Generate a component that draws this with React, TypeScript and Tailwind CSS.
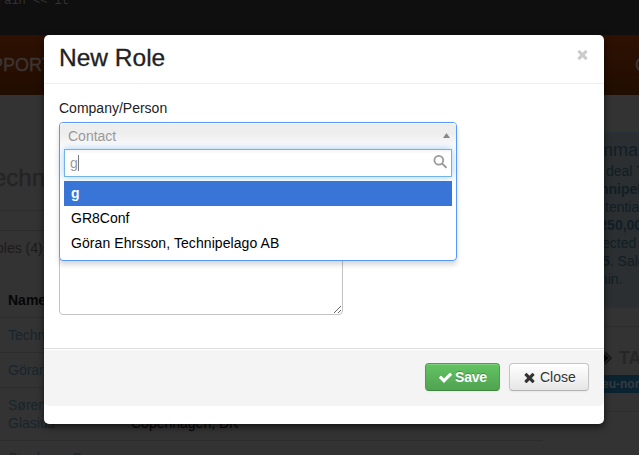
import React from 'react';

const TIMES =
  'M1490 1322q0 40-28 68l-136 136q-28 28-68 28t-68-28l-294-294-294 294q-28 28-68 28t-68-28l-136-136q-28-28-28-68t28-68l294-294-294-294q-28-28-28-68t28-68l136-136q28-28 68-28t68 28l294 294 294-294q28-28 68-28t68 28l136 136q28 28 28 68t-28 68l-294 294 294 294q28 28 28 68z';
const CHECK =
  'M1671 566q0 40-28 68l-724 724-136 136q-28 28-68 28t-68-28l-136-136-362-362q-28-28-28-68t28-68l136-136q28-28 68-28t68 28l294 295 656-657q28-28 68-28t68 28l136 136q28 28 28 68z';

function Glyph({ d, className }: { d: string; className: string }) {
  return (
    <svg viewBox="0 0 1792 1792" className={className} fill="currentColor">
      <path d={d} />
    </svg>
  );
}

function Row({ name, place, className }: { name: React.ReactNode; place?: string; className: string }) {
  return (
    <div className={`flex border-t border-[#2c2c2c] pl-2 pt-2 leading-[18px] ${className}`}>
      <div className="w-[123px] text-[#17252d]">{name}</div>
      <div className="pt-[18px] text-[#060606]">{place}</div>
    </div>
  );
}

function Page() {
  return (
    <div className="flex h-[455px] flex-col overflow-hidden bg-[#333333] text-[14px]">
      <div className="flex h-[35px] shrink-0 flex-col bg-[#0f0f0f]">
        <pre className="-mt-[7px] ml-[-3px] font-['Liberation_Mono'] text-[12px] leading-[17px] text-[#333333]">rain &lt;&lt; it</pre>
      </div>
      <div className="flex h-[60px] shrink-0 items-center justify-between bg-linear-to-b from-[#2e1103] to-[#210d01] text-[18px] text-[#3b3532]">
        <span className="-ml-[9px] [-webkit-text-stroke:0.4px_#3b3532]">PPORT</span>
        <span className="-mr-[9px] [-webkit-text-stroke:0.4px_#3b3532]">C</span>
      </div>
      <div className="flex flex-1">
        <div className="w-[543px]">
          <div className="h-[115px] overflow-hidden pt-[69px]">
            <h1 className="-ml-[7px] text-[24px] leading-7 text-[#242424] [-webkit-text-stroke:0.4px_#242424]">echnipelago</h1>
          </div>
          <div className="h-[20px] border-t border-[#2d2d2d]" />
          <div className="h-[56px] border-t border-[#2b2b2b] pt-[8px] leading-[18px] text-[#1b1b1b]">
            <span className="-ml-[4px]">oles (4)</span>
          </div>
          <div className="h-[31px] pl-2 pt-[5px] font-bold leading-[18px] text-[#060606]">Name</div>
          <Row name="Technipelago" className="h-[35px]" />
          <Row name="Göran" className="h-[35px]" />
          <Row name={<>Søren<br />Glasius</>} place="Copenhagen, DK" className="h-[53px]" />
          <Row name="Stephane G" className="h-[35px]" />
        </div>
        <div className="ml-[41px] w-[55px] overflow-hidden whitespace-nowrap pt-[37px]">
          <div className="h-[176px] border-y border-[#253238] bg-[#2b2f31] pt-[7px] leading-[18px] text-[#111e25]">
            <h2 className="ml-[14px] h-[22px] text-[18px] leading-5">mmary</h2>
            <p className="ml-[22px]">deal T</p>
            <p className="ml-[16px] font-bold">hnipelago</p>
            <p className="ml-[21px]">tential</p>
            <p className="ml-[13px] font-bold">R50,000</p>
            <p className="ml-[18px]">ected</p>
            <p className="ml-[18px]"><b>5</b>. Sales</p>
            <p className="ml-[12px]">min.</p>
          </div>
          <div className="mt-[18px] h-[86px] border-y border-[#2d2d2d] pt-[22px]">
            <div className="flex h-[18px] items-center text-[17.5px] font-bold text-[#262626]">
              <svg viewBox="0 0 24 14" className="ml-[4px] h-[14px] w-[24px] shrink-0" fill="none" stroke="#161616">
                <path d="M2 1H14L21 7L14 13H2Z" fill="#080808" stroke="none" />
                <path d="M17 1L23 7L17 13" strokeWidth="1.5" />
              </svg>
              <span className="ml-[7px]">TAGS</span>
            </div>
            <div className="mt-[8px] h-[18px] bg-[#0b2230] pl-[18px] text-[12px] font-bold leading-[18px] text-[#333b40]">eu-nord</div>
          </div>
        </div>
      </div>
    </div>
  );
}

function RoleSelect() {
  return (
    <div className="absolute left-0 top-0 h-[139px] w-[398px] rounded-[4px] border border-[#5897fb] bg-white shadow-[0_4px_5px_rgba(0,0,0,0.15)]">
      <div className="flex h-[26px] items-center justify-between rounded-t-[3px] border-t border-white bg-linear-to-b from-[#eeeeee] from-40% to-white pl-2 pr-[6px] text-[#999999]">
        <span className="mb-[2px]">Contact</span>
        <svg viewBox="0 0 7 5" className="-mt-[2px] h-[5px] w-[7px]" fill="#888888">
          <path d="M3.5 0L7 5H0Z" />
        </svg>
      </div>
      <div className="mx-1 flex h-[28px] items-center border border-[#73b3e8] bg-linear-to-b from-[#f4f4f4] to-white to-15% pl-[5px] pr-[4px] text-[#999999] shadow-[0_0_7px_rgba(82,168,236,0.6)]">
        <span>g</span>
        <span className="h-[16px] w-px bg-[#777777]" />
        <svg viewBox="0 0 14 14" className="ml-auto h-[14px] w-[14px] -translate-y-px" fill="none" stroke="#999999">
          <circle cx="5.8" cy="5.3" r="4.4" strokeWidth="1.8" />
          <path d="M8.9 8.4L13.5 12.9" strokeWidth="2" />
        </svg>
      </div>
      <ul className="mx-1 mt-1 text-black">
        <li className="h-[25px] bg-[#3875d7] pl-[7px] font-bold leading-[25px] text-white">g</li>
        <li className="h-[25px] pl-[7px] leading-[25px]">GR8Conf</li>
        <li className="h-[25px] pl-[7px] leading-[25px] tracking-[0.08px]">Göran Ehrsson, Technipelago AB</li>
      </ul>
    </div>
  );
}

export default function App() {
  return (
    <div className="relative h-[455px] w-[639px] overflow-hidden font-['Liberation_Sans',Arial,sans-serif] text-[14px] leading-[18px]">
      <Page />
      <div className="absolute left-[44px] top-[35px] flex h-[389px] w-[560px] flex-col rounded-[5px] bg-white shadow-[0_3px_7px_rgba(0,0,0,0.6)]">
        <header className="flex h-[49px] justify-between border-b border-[#eeeeee] pl-[15px] pr-[14px] text-[#222222]">
          <h3 className="mt-[8px] text-[24.5px] leading-[30px] [-webkit-text-stroke:0.3px_#222222]">New Role</h3>
          <Glyph d={TIMES} className="mt-[12px] h-[15px] w-[15px] text-[#cccccc]" />
        </header>
        <div className="h-[264px] px-[15px] pt-[15px] text-[#222222]">
          <label className="block h-[23px] leading-[18px]">Company/Person</label>
          <div className="relative h-[193px]">
            <div className="flex h-[193px] w-[284px] items-end justify-end rounded-[4px] border border-[#c4c4c4]">
              <svg viewBox="0 0 9 9" className="h-[9px] w-[9px]" stroke="#555555" strokeWidth="0.9">
                <path d="M1 8L8 1M5 8L8 5" />
              </svg>
            </div>
            <RoleSelect />
          </div>
        </div>
        <footer className="flex h-[58px] justify-end gap-[9px] rounded-b-[5px] border-t border-[#dddddd] bg-[#f4f4f4] pr-[15px] pt-[14px] shadow-[inset_0_1px_0_#fff]">
          <button className="flex h-[28px] w-[75px] items-center rounded-[4px] border border-[#4a9f4a] border-b-[#3f863f] bg-linear-to-b from-[#62c462] to-[#51a351] pl-[12px] font-bold text-white shadow-[inset_0_1px_0_rgba(255,255,255,0.2),0_1px_2px_rgba(0,0,0,0.05)] [text-shadow:0_-1px_0_rgba(0,0,0,0.25)]">
            <Glyph d={CHECK} className="h-[15px] w-[15px]" />
            <span className="ml-[2px] tracking-[-0.2px]">Save</span>
          </button>
          <button className="flex h-[28px] w-[80px] items-center rounded-[4px] border border-[#c5c5c5] border-b-[#b3b3b3] bg-linear-to-b from-white to-[#e6e6e6] pl-[12px] text-[#333333] shadow-[inset_0_1px_0_rgba(255,255,255,0.2),0_1px_2px_rgba(0,0,0,0.05)] [text-shadow:0_1px_1px_rgba(255,255,255,0.75)]">
            <Glyph d={TIMES} className="h-[15px] w-[15px]" />
            <span className="ml-[3px]">Close</span>
          </button>
        </footer>
      </div>
    </div>
  );
}
